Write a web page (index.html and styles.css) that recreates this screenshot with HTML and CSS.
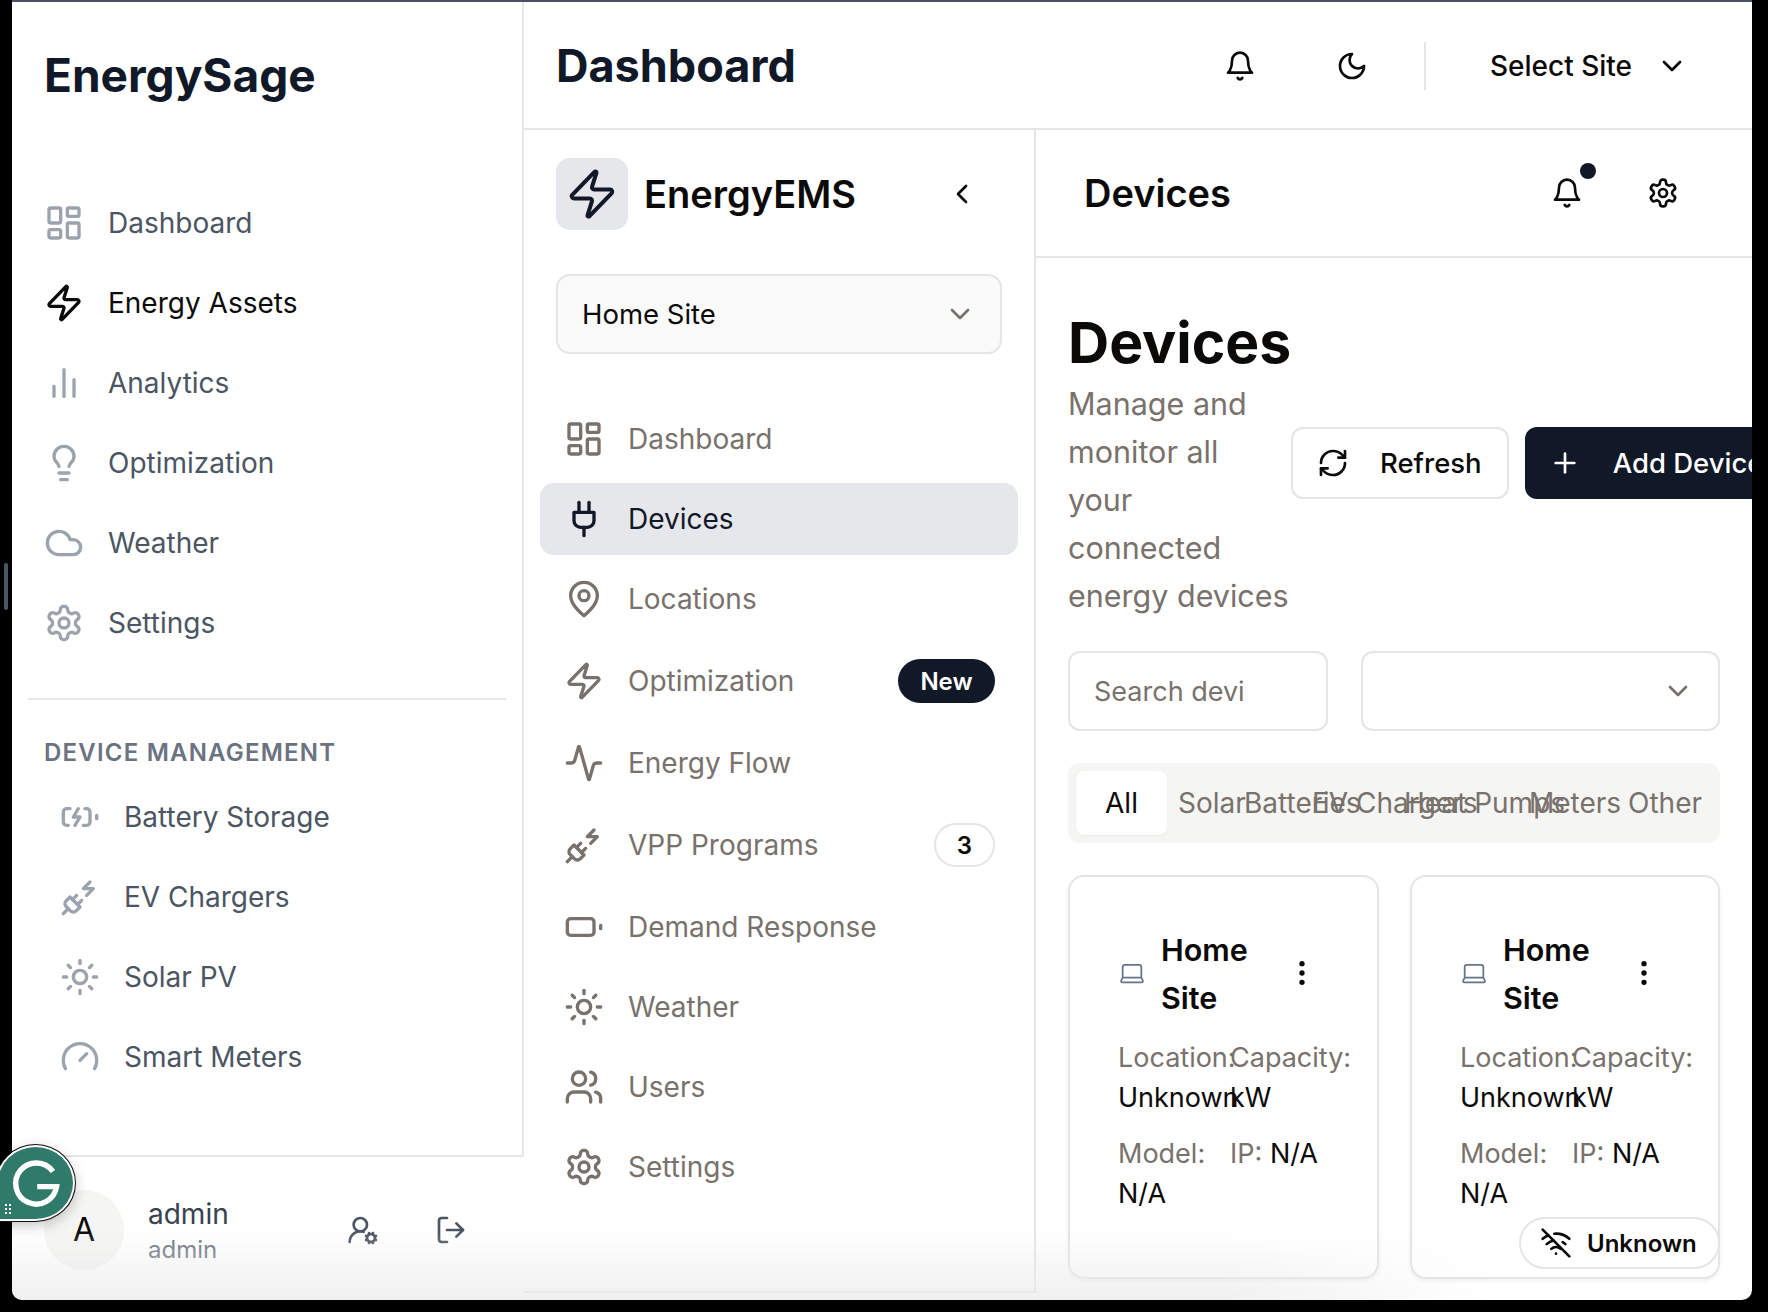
FILE: index.html
```html
<!DOCTYPE html>
<html lang="en">

<head>
    <meta charset="UTF-8">
    <meta name="viewport" content="width=device-width, initial-scale=1.0">
    <title>EnergySage</title>
    <link rel="stylesheet" href="styles.css">
</head>

<body>
    <svg class="icon-defs" xmlns="http://www.w3.org/2000/svg">
        <symbol id="i-dashboard" viewBox="0 0 24 24"><rect x="3" y="3" width="7" height="9" rx="1"/><rect x="14" y="3" width="7" height="5" rx="1"/><rect x="14" y="12" width="7" height="9" rx="1"/><rect x="3" y="16" width="7" height="5" rx="1"/></symbol>
        <symbol id="i-zap" viewBox="0 0 24 24"><path d="M4 14a1 1 0 0 1-.78-1.63l9.9-10.2a.5.5 0 0 1 .86.46l-1.92 6.02A1 1 0 0 0 13 10h7a1 1 0 0 1 .78 1.63l-9.9 10.2a.5.5 0 0 1-.86-.46l1.92-6.02A1 1 0 0 0 11 14z"/></symbol>
        <symbol id="i-chart" viewBox="0 0 24 24"><path d="M18 20V10"/><path d="M12 20V4"/><path d="M6 20v-6"/></symbol>
        <symbol id="i-bulb" viewBox="0 0 24 24"><path d="M15 14c.2-1 .7-1.7 1.5-2.5 1-.9 1.5-2.2 1.5-3.5A6 6 0 0 0 6 8c0 1 .2 2.2 1.5 3.5.7.7 1.3 1.5 1.5 2.5"/><path d="M9 18h6"/><path d="M10 22h4"/></symbol>
        <symbol id="i-cloud" viewBox="0 0 24 24"><path d="M17.5 19H9a7 7 0 1 1 6.71-9h1.79a4.5 4.5 0 1 1 0 9Z"/></symbol>
        <symbol id="i-gear" viewBox="0 0 24 24"><path d="M12.22 2h-.44a2 2 0 0 0-2 2v.18a2 2 0 0 1-1 1.73l-.43.25a2 2 0 0 1-2 0l-.15-.08a2 2 0 0 0-2.73.73l-.22.38a2 2 0 0 0 .73 2.73l.15.1a2 2 0 0 1 1 1.72v.51a2 2 0 0 1-1 1.74l-.15.09a2 2 0 0 0-.73 2.73l.22.38a2 2 0 0 0 2.73.73l.15-.08a2 2 0 0 1 2 0l.43.25a2 2 0 0 1 1 1.73V20a2 2 0 0 0 2 2h.44a2 2 0 0 0 2-2v-.18a2 2 0 0 1 1-1.73l.43-.25a2 2 0 0 1 2 0l.15.08a2 2 0 0 0 2.73-.73l.22-.39a2 2 0 0 0-.73-2.73l-.15-.08a2 2 0 0 1-1-1.74v-.5a2 2 0 0 1 1-1.74l.15-.09a2 2 0 0 0 .73-2.73l-.22-.38a2 2 0 0 0-2.73-.73l-.15.08a2 2 0 0 1-2 0l-.43-.25a2 2 0 0 1-1-1.73V4a2 2 0 0 0-2-2z"/><circle cx="12" cy="12" r="3"/></symbol>
        <symbol id="i-battery-charging" viewBox="0 0 24 24"><path d="M15 7h1a2 2 0 0 1 2 2v6a2 2 0 0 1-2 2h-2"/><path d="M6 7H4a2 2 0 0 0-2 2v6a2 2 0 0 0 2 2h1"/><path d="m11 7-3 5h4l-3 5"/><path d="M22 11v2"/></symbol>
        <symbol id="i-plug-zap" viewBox="0 0 24 24"><path d="M6.3 20.3a2.4 2.4 0 0 0 3.4 0L12 18l-6-6-2.3 2.3a2.4 2.4 0 0 0 0 3.4Z"/><path d="m2 22 3-3"/><path d="M7.5 13.5 10 11"/><path d="M10.5 16.5 13 14"/><path d="m18 3-4 4h6l-4 4"/></symbol>
        <symbol id="i-sun" viewBox="0 0 24 24"><circle cx="12" cy="12" r="4"/><path d="M12 2v2"/><path d="M12 20v2"/><path d="m4.93 4.93 1.41 1.41"/><path d="m17.66 17.66 1.41 1.41"/><path d="M2 12h2"/><path d="M20 12h2"/><path d="m6.34 17.66-1.41 1.41"/><path d="m19.07 4.93-1.41 1.41"/></symbol>
        <symbol id="i-gauge" viewBox="0 0 24 24"><path d="m12 14 4-4"/><path d="M3.34 19a10 10 0 1 1 17.32 0"/></symbol>
        <symbol id="i-user-cog" viewBox="0 0 24 24"><path d="M2 21a8 8 0 0 1 10.434-7.62"/><circle cx="10" cy="8" r="5"/><circle cx="18" cy="18" r="3"/><path d="m19.5 14.3-.4.9"/><path d="m16.9 20.8-.4.9"/><path d="m21.7 19.5-.9-.4"/><path d="m15.2 16.9-.9-.4"/><path d="m21.7 16.5-.9.4"/><path d="m15.2 19.1-.9.4"/><path d="m16.5 14.3.4.9"/><path d="m19.1 20.8.4.9"/></symbol>
        <symbol id="i-logout" viewBox="0 0 24 24"><path d="M9 21H5a2 2 0 0 1-2-2V5a2 2 0 0 1 2-2h4"/><path d="m16 17 5-5-5-5"/><path d="M21 12H9"/></symbol>
        <symbol id="i-plug" viewBox="0 0 24 24"><path d="M12 22v-5"/><path d="M9 8V2"/><path d="M15 8V2"/><path d="M18 8v5a4 4 0 0 1-4 4h-4a4 4 0 0 1-4-4V8Z"/></symbol>
        <symbol id="i-pin" viewBox="0 0 24 24"><path d="M20 10c0 6-8 12-8 12s-8-6-8-12a8 8 0 0 1 16 0Z"/><circle cx="12" cy="10" r="3"/></symbol>
        <symbol id="i-activity" viewBox="0 0 24 24"><path d="M22 12h-2.48a2 2 0 0 0-1.93 1.46l-2.35 8.36a.25.25 0 0 1-.48 0L9.24 2.18a.25.25 0 0 0-.48 0l-2.35 8.36A2 2 0 0 1 4.49 12H2"/></symbol>
        <symbol id="i-battery" viewBox="0 0 24 24"><rect x="2" y="7" width="16" height="10" rx="2"/><path d="M22 11v2"/></symbol>
        <symbol id="i-users" viewBox="0 0 24 24"><path d="M16 21v-2a4 4 0 0 0-4-4H6a4 4 0 0 0-4 4v2"/><circle cx="9" cy="7" r="4"/><path d="M22 21v-2a4 4 0 0 0-3-3.87"/><path d="M16 3.13a4 4 0 0 1 0 7.75"/></symbol>
        <symbol id="i-bell" viewBox="0 0 24 24"><path d="M6 8a6 6 0 0 1 12 0c0 7 3 9 3 9H3s3-2 3-9"/><path d="M10.3 21a1.94 1.94 0 0 0 3.4 0"/></symbol>
        <symbol id="i-moon" viewBox="0 0 24 24"><path d="M12 3a6 6 0 0 0 9 9 9 9 0 1 1-9-9Z"/></symbol>
        <symbol id="i-down" viewBox="0 0 24 24"><path d="m6 9 6 6 6-6"/></symbol>
        <symbol id="i-left" viewBox="0 0 24 24"><path d="m15 18-6-6 6-6"/></symbol>
        <symbol id="i-refresh" viewBox="0 0 24 24"><path d="M3 12a9 9 0 0 1 9-9 9.75 9.75 0 0 1 6.74 2.74L21 8"/><path d="M21 3v5h-5"/><path d="M21 12a9 9 0 0 1-9 9 9.75 9.75 0 0 1-6.74-2.74L3 16"/><path d="M8 16H3v5"/></symbol>
        <symbol id="i-plus" viewBox="0 0 24 24"><path d="M5 12h14"/><path d="M12 5v14"/></symbol>
        <symbol id="i-laptop" viewBox="0 0 24 24"><path d="M20 16V7a2 2 0 0 0-2-2H6a2 2 0 0 0-2 2v9m16 0H4m16 0 1.28 2.55a1 1 0 0 1-.9 1.45H3.62a1 1 0 0 1-.9-1.45L4 16"/></symbol>
        <symbol id="i-more" viewBox="0 0 24 24"><circle cx="12" cy="5" r="1"/><circle cx="12" cy="12" r="1"/><circle cx="12" cy="19" r="1"/></symbol>
        <symbol id="i-wifi-off" viewBox="0 0 24 24"><path d="M12 20h.01"/><path d="M8.5 16.429a5 5 0 0 1 7 0"/><path d="M5 12.859a10 10 0 0 1 5.17-2.69"/><path d="M19 12.859a10 10 0 0 0-2.007-1.523"/><path d="M2 8.82a15 15 0 0 1 4.177-2.643"/><path d="M22 8.82a15 15 0 0 0-11.288-3.764"/><path d="m2 2 20 20"/></symbol>
    </svg>

    <div class="scroll-handle"></div>

    <div class="window">
        <aside class="sidebar">
            <div class="sidebar-top">
                <div class="brand">EnergySage</div>
                <nav class="side-nav">
                    <a class="side-link"><svg class="icon"><use href="#i-dashboard"/></svg>Dashboard</a>
                    <a class="side-link active"><svg class="icon"><use href="#i-zap"/></svg>Energy Assets</a>
                    <a class="side-link"><svg class="icon"><use href="#i-chart"/></svg>Analytics</a>
                    <a class="side-link"><svg class="icon"><use href="#i-bulb"/></svg>Optimization</a>
                    <a class="side-link"><svg class="icon"><use href="#i-cloud"/></svg>Weather</a>
                    <a class="side-link"><svg class="icon"><use href="#i-gear"/></svg>Settings</a>
                </nav>
                <div class="side-group">
                    <div class="side-label">DEVICE MANAGEMENT</div>
                    <a class="side-link sub"><svg class="icon"><use href="#i-battery-charging"/></svg>Battery Storage</a>
                    <a class="side-link sub"><svg class="icon"><use href="#i-plug-zap"/></svg>EV Chargers</a>
                    <a class="side-link sub"><svg class="icon"><use href="#i-sun"/></svg>Solar PV</a>
                    <a class="side-link sub"><svg class="icon"><use href="#i-gauge"/></svg>Smart Meters</a>
                </div>
            </div>
            <div class="user-bar">
                <div class="avatar">A</div>
                <div class="user-text">
                    <div class="user-name">admin</div>
                    <div class="user-role">admin</div>
                </div>
                <svg class="icon user-action"><use href="#i-user-cog"/></svg>
                <svg class="icon user-action"><use href="#i-logout"/></svg>
            </div>
        </aside>

        <div class="main">
            <header class="topbar">
                <h1 class="topbar-title">Dashboard</h1>
                <svg class="icon topbar-icon"><use href="#i-bell"/></svg>
                <svg class="icon topbar-icon moon"><use href="#i-moon"/></svg>
                <div class="topbar-divider"></div>
                <div class="site-pick">Select Site <svg class="icon"><use href="#i-down"/></svg></div>
            </header>

            <div class="content">
                <aside class="ems">
                    <div class="ems-head">
                        <div class="ems-logo"><svg class="icon"><use href="#i-zap"/></svg></div>
                        <div class="ems-name">EnergyEMS</div>
                        <svg class="icon ems-collapse"><use href="#i-left"/></svg>
                    </div>
                    <div class="ems-select">Home Site <svg class="icon"><use href="#i-down"/></svg></div>
                    <nav class="ems-nav">
                        <a class="ems-link"><svg class="icon"><use href="#i-dashboard"/></svg>Dashboard</a>
                        <a class="ems-link active"><svg class="icon"><use href="#i-plug"/></svg>Devices</a>
                        <a class="ems-link"><svg class="icon"><use href="#i-pin"/></svg>Locations</a>
                        <a class="ems-link tall"><svg class="icon"><use href="#i-zap"/></svg>Optimization<span class="pill pill-new">New</span></a>
                        <a class="ems-link"><svg class="icon"><use href="#i-activity"/></svg>Energy Flow</a>
                        <a class="ems-link tall"><svg class="icon"><use href="#i-plug-zap"/></svg>VPP Programs<span class="pill pill-count">3</span></a>
                        <a class="ems-link"><svg class="icon"><use href="#i-battery"/></svg>Demand Response</a>
                        <a class="ems-link"><svg class="icon"><use href="#i-sun"/></svg>Weather</a>
                        <a class="ems-link"><svg class="icon"><use href="#i-users"/></svg>Users</a>
                        <a class="ems-link"><svg class="icon"><use href="#i-gear"/></svg>Settings</a>
                    </nav>
                </aside>

                <section class="panel">
                    <div class="panel-head">
                        <h2 class="panel-title">Devices</h2>
                        <span class="bell-wrap"><svg class="icon panel-icon"><use href="#i-bell"/></svg><span class="bell-dot"></span></span>
                        <svg class="icon panel-icon gear"><use href="#i-gear"/></svg>
                    </div>
                    <div class="panel-body">
                        <div class="page-head">
                            <div class="page-intro">
                                <h2 class="page-title">Devices</h2>
                                <p class="page-sub">Manage and monitor all your connected energy devices</p>
                            </div>
                            <button class="btn btn-outline"><svg class="icon"><use href="#i-refresh"/></svg>Refresh</button>
                            <button class="btn btn-dark"><svg class="icon"><use href="#i-plus"/></svg>Add Device</button>
                        </div>

                        <div class="filters">
                            <div class="field field-search">Search devi</div>
                            <div class="field field-select"><svg class="icon"><use href="#i-down"/></svg></div>
                        </div>

                        <div class="tabs">
                            <div class="tab active">All</div>
                            <div class="tab">Solar</div>
                            <div class="tab">Batteries</div>
                            <div class="tab">EV Chargers</div>
                            <div class="tab">Heat Pumps</div>
                            <div class="tab">Meters</div>
                            <div class="tab">Other</div>
                        </div>

                        <div class="cards">
                            <article class="card">
                                <div class="card-head">
                                    <svg class="icon card-icon"><use href="#i-laptop"/></svg>
                                    <h3 class="card-title">Home Site</h3>
                                    <svg class="icon card-more"><use href="#i-more"/></svg>
                                </div>
                                <div class="card-grid">
                                    <div><span class="card-label">Location:</span> Unknown</div>
                                    <div><span class="card-label">Capacity:</span> kW</div>
                                    <div><span class="card-label">Model:</span> N/A</div>
                                    <div><span class="card-label">IP:</span> N/A</div>
                                </div>
                            </article>
                            <article class="card">
                                <div class="card-head">
                                    <svg class="icon card-icon"><use href="#i-laptop"/></svg>
                                    <h3 class="card-title">Home Site</h3>
                                    <svg class="icon card-more"><use href="#i-more"/></svg>
                                </div>
                                <div class="card-grid">
                                    <div><span class="card-label">Location:</span> Unknown</div>
                                    <div><span class="card-label">Capacity:</span> kW</div>
                                    <div><span class="card-label">Model:</span> N/A</div>
                                    <div><span class="card-label">IP:</span> N/A</div>
                                </div>
                                <div class="status"><svg class="icon"><use href="#i-wifi-off"/></svg>Unknown</div>
                            </article>
                        </div>
                    </div>
                </section>
            </div>
        </div>

        <div class="bottom-fade"></div>
    </div>

    <!-- grammarly bubble sits over the page -->
    <div class="bubble">
        <svg class="bubble-g" viewBox="0 0 48 48"><path d="M38 14.5A17 17 0 1 0 41 27H25"/></svg>
        <span class="bubble-grip"></span>
    </div>
</body>

</html>
```

FILE: styles.css
```css
* {
    box-sizing: border-box;
}

body {
    margin: 0;
    width: 1768px;
    height: 1312px;
    overflow: hidden;
    position: relative;
    background-color: #000;
    font-family: 'Inter', 'Liberation Sans', sans-serif;
    color: #0c0a09;
}

h1,
h2,
h3,
p {
    margin: 0;
}

.icon-defs {
    display: none;
}

.icon {
    width: 40px;
    height: 40px;
    flex: none;
    fill: none;
    stroke: currentColor;
    stroke-width: 2;
    stroke-linecap: round;
    stroke-linejoin: round;
}

.scroll-handle {
    position: absolute;
    left: 4px;
    top: 563px;
    width: 4px;
    height: 47px;
    border-radius: 2px;
    background-color: #4b5563;
}

.window {
    position: absolute;
    left: 12px;
    top: 0;
    width: 1740px;
    height: 1300px;
    display: flex;
    overflow: hidden;
    background: white;
    border-top: 2px solid #4b5068;
    border-radius: 0 0 10px 10px;
}

/* left sidebar */
.sidebar {
    width: 512px;
    flex: none;
    display: flex;
    flex-direction: column;
}

.sidebar-top {
    height: 1157px;
    flex: none;
    border-right: 2px solid #e5e7eb;
    border-bottom: 2px solid #e5e7eb;
    margin-top: -2px;
}

.brand {
    padding: 50px 0 0 32px;
    height: 183px;
    font-size: 46px;
    line-height: 50px;
    font-weight: 700;
    color: #111827;
}

.side-nav {
    padding-bottom: 35px;
    margin: 0 16px;
    border-bottom: 2px solid #e5e7eb;
}

.side-link {
    display: flex;
    align-items: center;
    gap: 24px;
    height: 80px;
    padding-left: 16px;
    font-size: 28px;
    color: #4b5563;
}

.side-link .icon {
    color: #9ca3af;
}

.side-link.active {
    color: #0c0a09;
}

.side-link.active .icon {
    color: #0c0a09;
}

.side-label {
    padding: 37px 0 0 32px;
    height: 77px;
    font-size: 24px;
    line-height: 32px;
    font-weight: 600;
    letter-spacing: 1.2px;
    color: #6b7280;
}

.side-link.sub {
    padding-left: 48px;
}

.user-bar {
    flex: 1;
    display: flex;
    align-items: center;
    padding: 2px 0 0 32px;
    color: #4b5563;
}

.avatar {
    width: 80px;
    height: 80px;
    flex: none;
    display: flex;
    align-items: center;
    justify-content: center;
    border-radius: 50%;
    background-color: #f5f5f4;
    font-size: 32px;
    color: #0c0a09;
}

.user-text {
    width: 199px;
    margin-left: 24px;
}

.user-name {
    font-size: 28px;
    line-height: 40px;
    color: #374151;
}

.user-role {
    font-size: 24px;
    line-height: 32px;
    color: #6b7280;
}

.user-action {
    width: 32px;
    height: 32px;
    margin-right: 56px;
}

/* right side */
.main {
    flex: 1;
    min-width: 0;
    display: flex;
    flex-direction: column;
}

.topbar {
    height: 128px;
    flex: none;
    display: flex;
    align-items: center;
    padding: 1px 0 0 32px;
    border-bottom: 2px solid #e5e5e5;
}

.topbar-title {
    flex: 1;
    font-size: 45px;
    font-weight: 700;
    color: #111827;
}

.topbar-icon {
    width: 32px;
    height: 32px;
    margin-right: 80px;
}

.topbar-icon.moon {
    margin-right: 56px;
}

.topbar-divider {
    width: 2px;
    height: 48px;
    background-color: #e5e5e5;
}

.site-pick {
    display: flex;
    align-items: center;
    gap: 24px;
    margin: 0 64px;
    font-size: 28px;
    font-weight: 500;
}

.site-pick .icon {
    width: 32px;
    height: 32px;
}

.content {
    flex: 1;
    min-height: 0;
    display: flex;
}

/* energy ems menu */
.ems {
    width: 512px;
    flex: none;
    height: 1163px;
    border-right: 2px solid #e5e5e5;
    border-bottom: 2px solid #e5e5e5;
    padding: 28px 0 0 32px;
}

.ems-head {
    display: flex;
    align-items: center;
    height: 72px;
}

.ems-logo {
    width: 72px;
    height: 72px;
    display: flex;
    align-items: center;
    justify-content: center;
    border-radius: 14px;
    background-color: #e5e7eb;
    color: #111827;
}

.ems-logo .icon {
    width: 54px;
    height: 54px;
    stroke-width: 1.8;
}

.ems-name {
    flex: 1;
    margin-left: 16px;
    font-size: 38px;
    font-weight: 600;
}

.ems-collapse {
    width: 32px;
    height: 32px;
    margin-right: 56px;
}

.ems-select {
    width: 446px;
    height: 80px;
    margin-top: 44px;
    display: flex;
    align-items: center;
    justify-content: space-between;
    padding: 0 24px;
    border: 2px solid #e5e5e5;
    border-radius: 14px;
    background-color: #fafafa;
    font-size: 27.5px;
}

.ems-select .icon {
    width: 32px;
    height: 32px;
    color: #78716c;
}

.ems-nav {
    margin: 49px 0 0 -16px;
    width: 478px;
    display: flex;
    flex-direction: column;
    gap: 8px;
}

.ems-link {
    display: flex;
    align-items: center;
    gap: 24px;
    height: 72px;
    padding: 0 23px 0 24px;
    border-radius: 14px;
    font-size: 28px;
    color: #78716c;
}

.ems-link.tall {
    height: 76px;
}

.ems-link.active {
    background-color: #e5e7eb;
    color: #111827;
}

.pill {
    margin-left: auto;
    display: flex;
    align-items: center;
    justify-content: center;
    height: 44px;
    border-radius: 22px;
    font-size: 24px;
    font-weight: 600;
}

.pill-new {
    width: 97px;
    background-color: #111827;
    color: white;
}

.pill-count {
    width: 61px;
    border: 2px solid #e5e5e5;
    color: #0c0a09;
}

/* devices panel */
.panel {
    flex: 1;
    min-width: 0;
    overflow: hidden;
}

.panel-head {
    height: 128px;
    display: flex;
    align-items: center;
    padding-left: 48px;
    border-bottom: 2px solid #e5e5e5;
}

.panel-title {
    flex: 1;
    font-size: 38px;
    font-weight: 600;
}

.bell-wrap {
    position: relative;
    display: flex;
    margin-right: 64px;
}

.panel-icon {
    width: 32px;
    height: 32px;
}

.bell-dot {
    position: absolute;
    top: -14px;
    right: -13px;
    width: 16px;
    height: 16px;
    border-radius: 50%;
    background-color: #111827;
}

.panel-icon.gear {
    margin-right: 73px;
}

.panel-body {
    padding: 52px 0 0 32px;
}

.page-head {
    display: flex;
    align-items: center;
    width: 900px;
}

.page-intro {
    width: 223px;
    flex: none;
}

.page-title {
    font-size: 57px;
    line-height: 66px;
    font-weight: 700;
    white-space: nowrap;
}

.page-sub {
    margin-top: 4px;
    font-size: 30.5px;
    line-height: 48px;
    color: #78716c;
}

.btn {
    display: flex;
    align-items: center;
    gap: 31px;
    height: 72px;
    flex: none;
    padding: 0 25px 0 24px;
    margin-bottom: 4px;
    border-radius: 12px;
    font-family: inherit;
    font-size: 27.5px;
    font-weight: 500;
}

.btn .icon {
    width: 32px;
    height: 32px;
}

.btn-outline {
    background: white;
    border: 2px solid #e5e5e5;
    color: #0c0a09;
}

.btn-dark {
    margin-left: 16px;
    gap: 32px;
    background-color: #111827;
    border: none;
    color: white;
}

.filters {
    display: flex;
    gap: 33px;
    margin-top: 31px;
    width: 652px;
}

.field {
    height: 80px;
    display: flex;
    align-items: center;
    border: 2px solid #e5e5e5;
    border-radius: 12px;
    font-size: 27px;
}

.field-search {
    width: 260px;
    padding-left: 24px;
    color: #78716c;
}

.field-select {
    flex: 1;
    justify-content: flex-end;
    padding-right: 24px;
    color: #78716c;
}

.field-select .icon {
    width: 32px;
    height: 32px;
}

.tabs {
    display: flex;
    align-items: center;
    width: 652px;
    height: 80px;
    margin-top: 32px;
    padding: 0 8px;
    border-radius: 12px;
    background-color: #f5f5f4;
    font-size: 28px;
    color: #78716c;
}

.tab {
    padding-left: 11px;
    white-space: nowrap;
    flex: none;
}

.tab.active {
    width: 91px;
    height: 64px;
    display: flex;
    align-items: center;
    justify-content: center;
    padding: 0;
    border-radius: 8px;
    background: white;
    box-shadow: 0 1px 2px rgba(0, 0, 0, 0.05);
    color: #0c0a09;
}

.tab:nth-child(2) {
    width: 66px;
}

.tab:nth-child(3) {
    width: 68px;
}

.tab:nth-child(4) {
    width: 92px;
}

.tab:nth-child(5) {
    width: 125px;
}

.tab:nth-child(6) {
    width: 99px;
}

.tab:nth-child(7) {
    width: 95px;
}

.cards {
    display: grid;
    grid-template-columns: 311px 310px;
    gap: 31px;
    margin-top: 32px;
}

.card {
    position: relative;
    height: 404px;
    padding: 49px 36px 0 48px;
    border: 2px solid #e5e5e5;
    border-radius: 16px;
    box-shadow: 0 2px 4px rgba(0, 0, 0, 0.06);
    background: white;
}

.card-head {
    display: flex;
    align-items: center;
    height: 96px;
}

.card-icon {
    width: 28px;
    height: 28px;
    margin-bottom: 2px;
    color: #64748b;
    stroke-width: 1.5;
}

.card-title {
    width: 125px;
    margin-left: 15px;
    font-size: 30.5px;
    line-height: 48px;
    font-weight: 600;
}

.card-more {
    width: 32px;
    height: 32px;
    margin-bottom: 2px;
    fill: currentColor;
}

.card-grid {
    display: grid;
    grid-template-columns: 112px 112px;
    row-gap: 16px;
    margin-top: 16px;
    font-size: 27px;
    line-height: 40px;
}

.card-label {
    color: #78716c;
}

.status {
    position: absolute;
    right: -2px;
    bottom: 8px;
    width: 201px;
    height: 52px;
    display: flex;
    align-items: center;
    gap: 15px;
    padding-left: 19px;
    border: 2px solid #e5e5e5;
    border-radius: 26px;
    background: white;
    font-size: 24px;
    font-weight: 600;
}

.status .icon {
    width: 32px;
    height: 32px;
}

.bottom-fade {
    position: absolute;
    left: 0;
    right: 0;
    bottom: 0;
    height: 70px;
    pointer-events: none;
    background: linear-gradient(to bottom, rgba(235, 235, 235, 0), rgba(235, 235, 235, 0.75));
    -webkit-mask-image: linear-gradient(to right, black 70%, transparent 85%);
    mask-image: linear-gradient(to right, black 70%, transparent 85%);
}

/* floating bubble */
.bubble {
    position: absolute;
    left: -4px;
    top: 1145px;
    width: 79px;
    height: 76px;
    display: flex;
    align-items: center;
    justify-content: center;
    border-radius: 50% 50% 50% 0;
    background-color: #2f7a68;
    border: 2px solid white;
    outline: 1px solid #111;
    box-shadow: 0 4px 14px rgba(0, 0, 0, 0.25);
}

.bubble-g {
    width: 58px;
    height: 58px;
    fill: none;
    stroke: white;
    stroke-width: 4.5;
}

.bubble-grip {
    position: absolute;
    left: 6px;
    bottom: 4px;
    width: 8px;
    height: 12px;
    background-image: radial-gradient(circle, white 1.2px, transparent 1.4px);
    background-size: 4px 4px;
}
```
